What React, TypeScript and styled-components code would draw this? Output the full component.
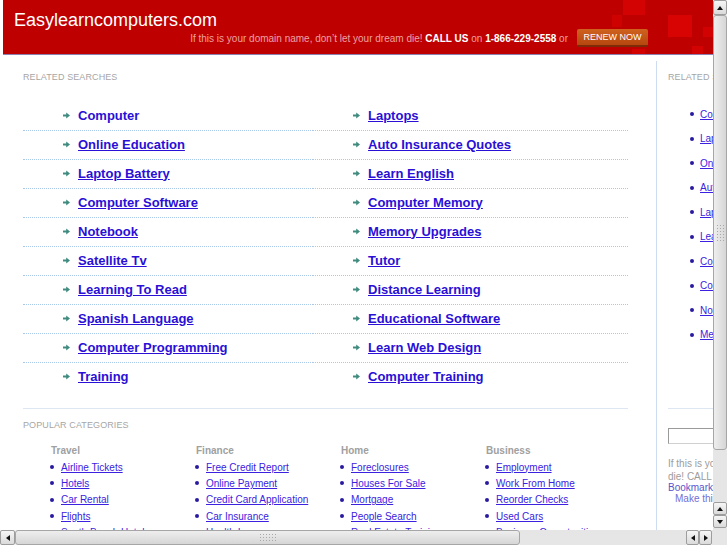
import React from "react";
import styled, {createGlobalStyle, css} from "styled-components";

const GlobalStyle = createGlobalStyle`
    html, body {
        margin: 0;
        padding: 0;
        overflow: hidden;
        background: #FFFFFF;
        font-family: "Liberation Sans", Arial, sans-serif;
    }
`;

const searchesLeft = [
    "Computer", "Online Education", "Laptop Battery", "Computer Software", "Notebook",
    "Satellite Tv", "Learning To Read", "Spanish Language", "Computer Programming", "Training",
];
const searchesRight = [
    "Laptops", "Auto Insurance Quotes", "Learn English", "Computer Memory", "Memory Upgrades",
    "Tutor", "Distance Learning", "Educational Software", "Learn Web Design", "Computer Training",
];
const sideLinks = [
    "Computer", "Laptops", "Online Education", "Auto Insurance Quotes", "Laptop Battery",
    "Learn English", "Computer Software", "Computer Memory", "Notebook", "Memory Upgrades",
];
const categories = [
    {title: "Travel", items: ["Airline Tickets", "Hotels", "Car Rental", "Flights", "South Beach Hotels"]},
    {title: "Finance", items: ["Free Credit Report", "Online Payment", "Credit Card Application", "Car Insurance", "Health Insurance"]},
    {title: "Home", items: ["Foreclosures", "Houses For Sale", "Mortgage", "People Search", "Real Estate Training"]},
    {title: "Business", items: ["Employment", "Work From Home", "Reorder Checks", "Used Cars", "Business Opportunities"]},
];

/* ---------- window frame ---------- */

const Screen = styled.div`
    display: grid;
    grid-template-columns: 713px 14px;
    grid-template-rows: 530px 15px;
    width: 727px;
    height: 545px;
`;

const Viewport = styled.div`
    overflow: hidden;
    background: #FFFFFF;
`;

/* ---------- header ---------- */

const Header = styled.div`
    position: relative;
    margin-left: 3px;
    height: 44px;
    padding: 10px 0 0 11px;
    background: #bf0000;
    border-bottom: 1px solid #8d7fae;
    overflow: hidden;
`;

const Deco = styled.svg`
    position: absolute;
    top: 0;
    right: 0;
`;

const Title = styled.div`
    position: relative;
    color: #FFFFFF;
    font-size: 18px;
    line-height: 20px;
`;

const TagRow = styled.div`
    position: relative;
    display: flex;
    justify-content: flex-end;
    align-items: center;
    height: 18px;
    margin-top: -1px;
    padding-right: 65px;
    font-size: 10px;
    color: #eda0a0;
    white-space: pre;
`;

const Strong = styled.b`
    color: #FFFFFF;
`;

const RenewButton = styled.span`
    margin-left: 9px;
    width: 71px;
    height: 18px;
    box-sizing: border-box;
    display: flex;
    align-items: center;
    justify-content: center;
    font-size: 9px;
    color: #FFFFFF;
    background: linear-gradient(#d0621f, #b5470f);
    border-bottom: 2px solid #7e2a06;
    border-radius: 2px;
`;

/* ---------- main area ---------- */

const Main = styled.div`
    display: flex;
    width: max-content;
    padding: 6px 0 0 23px;
`;

const LeftCol = styled.div`
    flex: none;
    width: 605px;
    margin-right: 28px;
`;

const SectionLabel = styled.div<{$top: number}>`
    margin-top: ${(p) => p.$top}px;
    font-size: 9px;
    line-height: 11px;
    letter-spacing: 0.1px;
    color: #a6a6a6;
    text-transform: uppercase;
`;

const SearchGrid = styled.div`
    display: grid;
    grid-template-columns: 290px 315px;
    grid-auto-flow: column;
    grid-template-rows: repeat(10, auto);
    margin-top: 19px;
`;

const SearchCell = styled.div<{$last: boolean}>`
    display: flex;
    align-items: center;
    gap: 8px;
    height: 29px;
    padding: 0 0 2px 40px;
    box-sizing: border-box;
    border-bottom: 1px dotted ${(p) => (p.$last ? "transparent" : "#a9c9ea")};
`;

const SearchLink = styled.a<{$plain?: boolean}>`
    font-size: 13px;
    font-weight: bold;
    line-height: 15px;
    color: #2a0fd6;
    text-decoration: ${(p) => (p.$plain ? "none" : "underline")};
    cursor: pointer;
`;

const Rule = styled.div<{$top: number}>`
    margin-top: ${(p) => p.$top}px;
    border-top: 1px solid #dde7f3;
`;

const CatGrid = styled.div`
    display: grid;
    grid-template-columns: repeat(4, 145px);
    padding-left: 28px;
    margin-top: 14px;
`;

const CatHead = styled.div`
    font-size: 10px;
    font-weight: bold;
    line-height: 12px;
    color: #a0a0a0;
    margin-bottom: 2px;
`;

const bullet = css`
    &::before {
        content: "";
        flex: none;
        width: 4px;
        height: 4px;
        border-radius: 50%;
        background: #2a1aa0;
    }
`;

const CatItem = styled.div`
    display: flex;
    align-items: center;
    gap: 7px;
    margin-left: -1px;
    height: 16.33px;
    white-space: nowrap;
    ${bullet}
`;

const SmallLink = styled.a`
    font-size: 10px;
    color: #3a22e0;
    text-decoration: underline;
    cursor: pointer;
`;

/* ---------- right column ---------- */

const RightCol = styled.div`
    flex: none;
    width: 240px;
    padding-left: 11px;
    border-left: 1px solid #cddcf0;
    padding-bottom: 40px;
`;

const SideList = styled.div`
    margin-top: 19px;
`;

const SideItem = styled.div`
    display: flex;
    align-items: center;
    gap: 6px;
    height: 24.5px;
    padding-left: 22px;
    white-space: nowrap;
    ${bullet}
`;

const SearchBox = styled.input`
    display: block;
    margin-top: 19px;
    width: 200px;
    height: 16px;
    box-sizing: border-box;
    border: 1px solid #9a9a9a;
    border-right-color: #d0d0d0;
    border-bottom-color: #d0d0d0;
    padding: 0;
`;

const InfoText = styled.div`
    margin-top: 13px;
    width: 225px;
    font-size: 10px;
    line-height: 13px;
    color: #9c9c9c;
`;

const Bookmarks = styled.div`
    margin-top: -1px;
    font-size: 10px;
    line-height: 11px;
    color: #5a55cc;
`;

const Indented = styled.div`
    padding-left: 7px;
    color: #7470d6;
`;

/* ---------- scrollbars ---------- */

const VBar = styled.div`
    display: flex;
    flex-direction: column;
    background: #f1f1f1;
`;

const HBar = styled.div`
    display: flex;
    background: #f1f1f1;
`;

const Corner = styled.div`
    background: #e6e6e6;
`;

const Track = styled.div<{$fixed?: number}>`
    flex: ${(p) => (p.$fixed ? `0 0 ${p.$fixed}px` : "1")};
    background-color: #f3f3f3;
    background-image: radial-gradient(#dedede 0.6px, transparent 0.9px);
    background-size: 2px 2px;
`;

const ArrowBtn = styled.div<{$dir: "up" | "down" | "left" | "right"; $w: number; $h: number}>`
    flex: none;
    display: flex;
    align-items: center;
    justify-content: center;
    width: ${(p) => p.$w}px;
    height: ${(p) => p.$h}px;
    box-sizing: border-box;
    border: 1px solid #9d9d9d;
    border-radius: 2px;
    background: linear-gradient(#f6f6f6, #dadada);

    &::after {
        content: "";
        width: 0;
        height: 0;
        border: 3px solid transparent;
        ${(p) => p.$dir === "up" && "border-bottom: 4px solid #111; border-top-width: 0;"}
        ${(p) => p.$dir === "down" && "border-top: 4px solid #111; border-bottom-width: 0;"}
        ${(p) => p.$dir === "left" && "border-right: 4px solid #111; border-left-width: 0;"}
        ${(p) => p.$dir === "right" && "border-left: 4px solid #111; border-right-width: 0;"}
    }
`;

const Thumb = styled.div<{$vertical: boolean; $size: number}>`
    flex: none;
    display: flex;
    align-items: center;
    justify-content: center;
    box-sizing: border-box;
    ${(p) => (p.$vertical ? `height: ${p.$size}px;` : `width: ${p.$size}px;`)}
    border: 1px solid #a6a6a6;
    border-radius: 3px;
    background: linear-gradient(${(p) => (p.$vertical ? "to right" : "to bottom")}, #eeeeee, #d6d6d6);
`;

const Grip = styled.div<{$vertical: boolean}>`
    width: ${(p) => (p.$vertical ? 9 : 17)}px;
    height: ${(p) => (p.$vertical ? 17 : 9)}px;
    background-image: radial-gradient(#a8a8a8 0.7px, transparent 1px);
    background-size: 3px 3px;
`;

function Arrow() {
    return (
        <svg width="7" height="7" viewBox="0 0 7 7">
            <path d="M0 2.6h3.2V0.4L7 3.5 3.2 6.6V4.4H0z" fill="#3f8b7f" />
        </svg>
    );
}

export default function App() {
    return (
        <>
            <GlobalStyle />
            <Screen>
                <Viewport>
                    <Header>
                        <Deco width="101" height="54" viewBox="0 0 101 54">
                            <rect x="11" y="0" width="22" height="15" fill="#d40303" />
                            <rect x="0" y="15" width="10" height="12" fill="#cf0202" />
                            <rect x="56" y="15" width="24" height="22" fill="#d80404" />
                            <rect x="91" y="27" width="10" height="10" fill="#d20202" />
                            <rect x="20" y="49" width="13" height="5" fill="#d20202" />
                            <rect x="80" y="46" width="11" height="8" fill="#d40303" />
                        </Deco>
                        <Title>Easylearncomputers.com</Title>
                        <TagRow>
                            If this is your domain name, don’t let your dream die! <Strong>CALL US</Strong> on <Strong>1-866-229-2558</Strong> or
                            <RenewButton>RENEW NOW</RenewButton>
                        </TagRow>
                    </Header>
                    <Main>
                        <LeftCol>
                            <SectionLabel $top={11}>Related Searches</SectionLabel>
                            <SearchGrid>
                                {[...searchesLeft, ...searchesRight].map((s, i) => (
                                    <SearchCell key={s} $last={i % 10 === 9}>
                                        <Arrow />
                                        <SearchLink $plain={i === 0}>{s}</SearchLink>
                                    </SearchCell>
                                ))}
                            </SearchGrid>
                            <Rule $top={16} />
                            <SectionLabel $top={11}>Popular Categories</SectionLabel>
                            <CatGrid>
                                {categories.map((c) => (
                                    <div key={c.title}>
                                        <CatHead>{c.title}</CatHead>
                                        {c.items.map((it) => (
                                            <CatItem key={it}><SmallLink>{it}</SmallLink></CatItem>
                                        ))}
                                    </div>
                                ))}
                            </CatGrid>
                        </LeftCol>
                        <RightCol>
                            <SectionLabel $top={11}>Related Searches</SectionLabel>
                            <SideList>
                                {sideLinks.map((s) => (
                                    <SideItem key={s}><SmallLink>{s}</SmallLink></SideItem>
                                ))}
                            </SideList>
                            <Rule $top={61} />
                            <SearchBox type="text" />
                            <InfoText>
                                If this is your domain name, don't let your dream die! CALL US on 1-866-229-2558
                            </InfoText>
                            <Bookmarks>
                                <div>Bookmark this page</div>
                                <Indented>Make this your homepage</Indented>
                            </Bookmarks>
                        </RightCol>
                    </Main>
                </Viewport>
                <VBar>
                    <ArrowBtn $dir="up" $w={14} $h={15} />
                    <Thumb $vertical={true} $size={435}><Grip $vertical={true} /></Thumb>
                    <Track />
                    <ArrowBtn $dir="up" $w={14} $h={13} />
                    <ArrowBtn $dir="down" $w={14} $h={13} />
                    <Track $fixed={2} />
                </VBar>
                <HBar>
                    <ArrowBtn $dir="left" $w={15} $h={15} />
                    <Thumb $vertical={false} $size={505}><Grip $vertical={false} /></Thumb>
                    <Track />
                    <ArrowBtn $dir="left" $w={13} $h={15} />
                    <ArrowBtn $dir="right" $w={13} $h={15} />
                    <Track $fixed={1} />
                </HBar>
                <Corner />
            </Screen>
        </>
    );
}
